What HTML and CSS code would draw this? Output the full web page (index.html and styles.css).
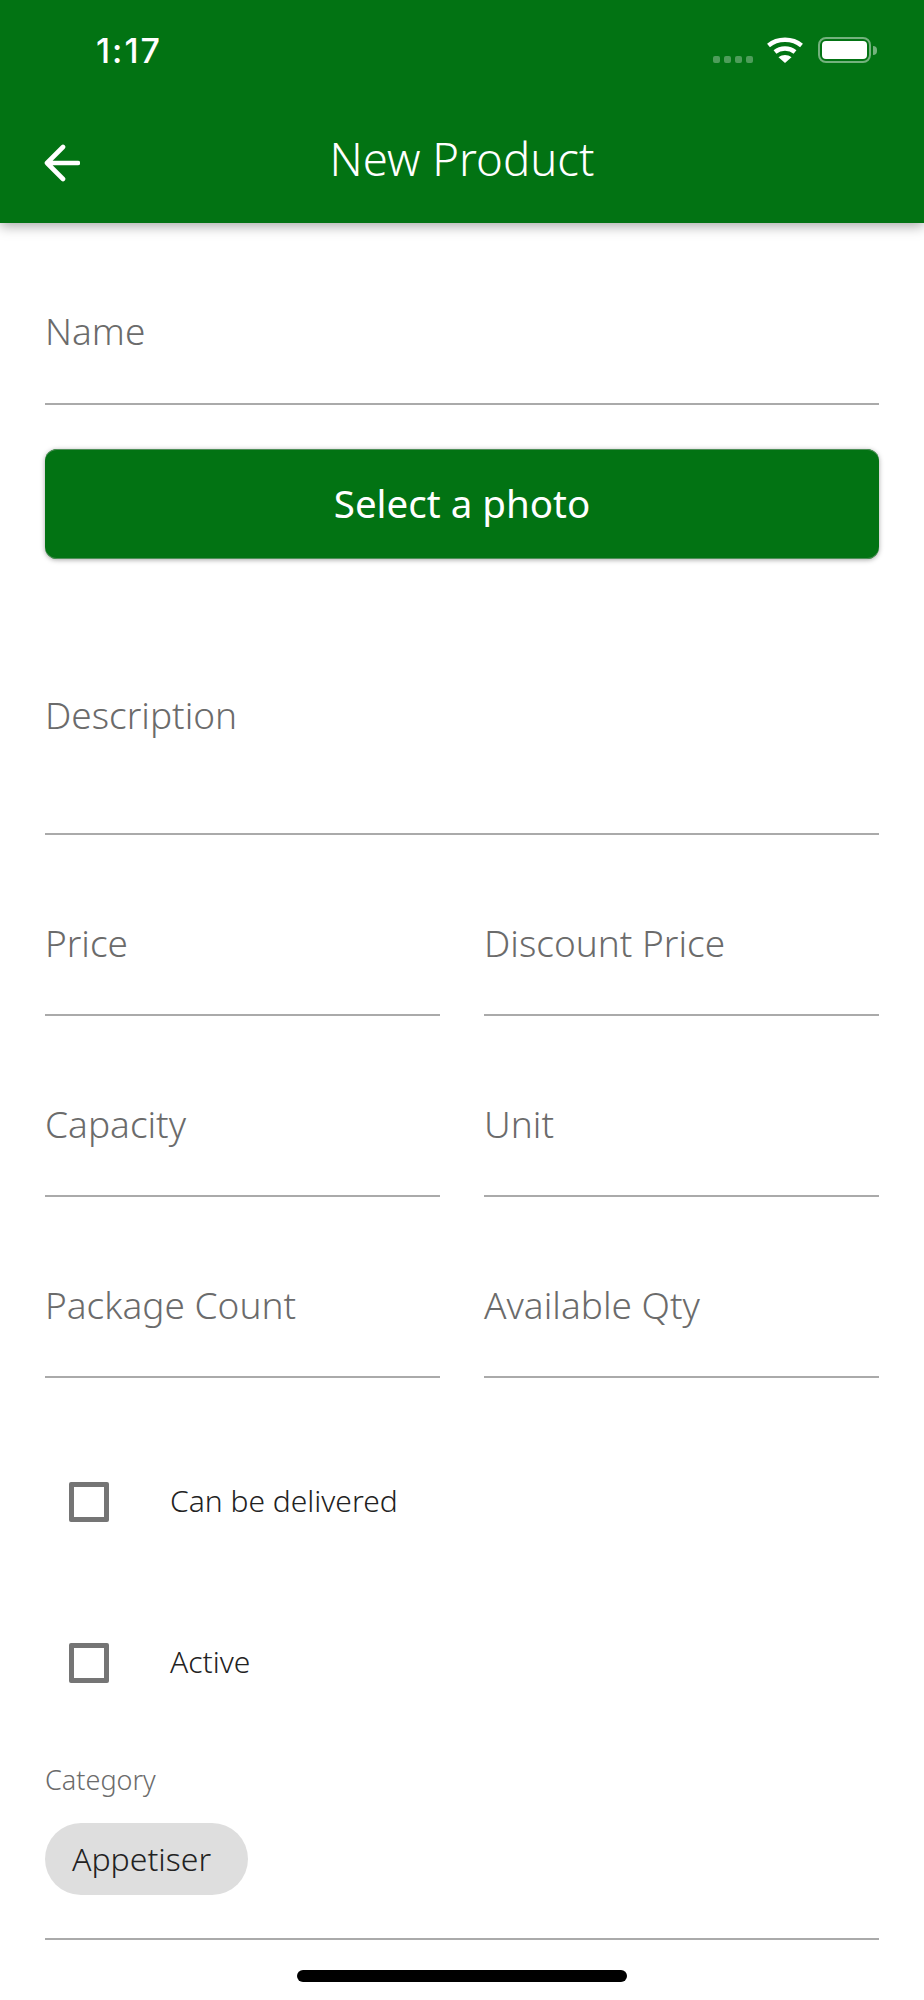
FILE: index.html
```html
<!DOCTYPE html>
<html lang="en">
<head>
  <meta charset="UTF-8">
  <meta name="viewport" content="width=device-width, initial-scale=1.0">
  <title>New Product</title>
  <link rel="stylesheet" href="styles.css">
</head>
<body>
  <div class="screen">
    <header class="header">
      <div class="status-bar">
        <span class="time">1:17</span>
        <div class="status-icons">
          <div class="signal"><i></i><i></i><i></i><i></i></div>
          <svg class="wifi" width="36" height="26" viewBox="0 0 36 26">
            <path d="M1.5 8.5C10.5 .8 25.5 .8 34.5 8.5" fill="none" stroke="#fff" stroke-width="4.4"/>
            <path d="M8 15C13.5 10.4 22.5 10.4 28 15" fill="none" stroke="#fff" stroke-width="4.4"/>
            <path d="M11.5 20.2C15.5 17.4 20.5 17.4 24.5 20.2L18 26Z" fill="#fff"/>
          </svg>
          <div class="battery"><div class="battery-fill"></div></div>
          <div class="battery-cap"></div>
        </div>
      </div>
      <div class="toolbar">
        <svg class="back" width="36" height="38" viewBox="0 0 36 38">
          <path d="M34 19H3M19 3L3 19L19 35" fill="none" stroke="#fff" stroke-width="4.6" stroke-linecap="round" stroke-linejoin="round"/>
        </svg>
        <h1 class="title">New Product</h1>
      </div>
    </header>

    <main class="form">
      <div class="field field-name"><span class="label">Name</span></div>
      <button class="photo-button">Select a photo</button>
      <div class="field field-desc"><span class="label">Description</span></div>

      <div class="field-row">
        <div class="field"><span class="label">Price</span></div>
        <div class="field"><span class="label">Discount Price</span></div>
      </div>
      <div class="field-row">
        <div class="field"><span class="label">Capacity</span></div>
        <div class="field"><span class="label">Unit</span></div>
      </div>
      <div class="field-row">
        <div class="field"><span class="label">Package Count</span></div>
        <div class="field"><span class="label">Available Qty</span></div>
      </div>

      <div class="check-row check-first"><div class="checkbox"></div><span class="check-label">Can be delivered</span></div>
      <div class="check-row"><div class="checkbox"></div><span class="check-label">Active</span></div>

      <div class="category">
        <div class="category-label">Category</div>
        <span class="chip">Appetiser</span>
      </div>
    </main>

    <div class="home-bar"></div>
  </div>
</body>
</html>
```

FILE: styles.css
```css
* {
  box-sizing: border-box;
}
html, body {
  margin: 0;
  padding: 0;
  background: #fff;
}
body {
  font-family: "Noto Sans", "Open Sans", sans-serif;
  font-weight: 300;
  color: #222;
}
.screen {
  position: relative;
  width: 924px;
  height: 2000px;
  overflow: hidden;
}

/* header */
.header {
  position: relative;
  height: 223px;
  background: #027313;
  box-shadow: 0 3px 12px rgba(0, 0, 0, 0.35);
  color: #fff;
}
.status-bar {
  display: flex;
  justify-content: space-between;
  align-items: flex-start;
  height: 112px;
  padding: 29px 47px 0 96px;
}
.time {
  font-family: "Inter", sans-serif;
  font-size: 34px;
  font-weight: 500;
  line-height: 44px;
  letter-spacing: 2px;
}
.status-icons {
  display: flex;
  align-items: center;
  height: 26px;
  margin-top: 8px;
}
.signal {
  display: flex;
  gap: 4px;
  margin: 18px 14px 0 0;
}
.signal i {
  width: 7px;
  height: 7px;
  border-radius: 2px;
  background: rgba(255, 255, 255, 0.3);
}
.wifi {
  margin-right: 15px;
}
.battery {
  width: 53px;
  height: 26px;
  padding: 2px;
  border: 2px solid rgba(255, 255, 255, 0.45);
  border-radius: 8px;
}
.battery-fill {
  width: 100%;
  height: 100%;
  background: #fff;
  border-radius: 4px;
}
.battery-cap {
  width: 4px;
  height: 9px;
  margin-left: 2px;
  background: rgba(255, 255, 255, 0.45);
  border-radius: 0 4px 4px 0;
}
.toolbar {
  display: flex;
  justify-content: center;
  position: relative;
  height: 96px;
}
.back {
  position: absolute;
  left: 44px;
  top: 32px;
}
.title {
  margin: 0;
  font-size: 45.5px;
  font-weight: 300;
  line-height: 93px;
}

/* form */
.form {
  padding: 0 45px;
}
.field {
  height: 181px;
  padding-top: 85px;
  border-bottom: 2px solid #aaa;
}
.field-name {
  height: 182px;
}
.field-desc {
  height: 276px;
  padding-top: 133px;
}
.label {
  display: block;
  font-size: 37px;
  line-height: 46px;
  color: #6b6b6b;
}
.field-row {
  display: grid;
  grid-template-columns: 395px 395px;
  gap: 44px;
}
.photo-button {
  display: block;
  width: 100%;
  height: 110px;
  margin-top: 44px;
  padding: 0 0 2px;
  border: 0;
  border-radius: 12px;
  background: #027313;
  box-shadow: inset 0 1px #4f8f59, inset 0 -1px #4f8f59, 0 1px 5px rgba(0, 0, 0, 0.35);
  color: #fff;
  font-family: inherit;
  font-size: 38.5px;
  font-weight: 400;
}
.check-row {
  display: flex;
  align-items: center;
  height: 161px;
  padding-left: 24px;
}
.check-first {
  margin-top: 43px;
}
.checkbox {
  width: 40px;
  height: 40px;
  border: 5px solid #757575;
  border-radius: 2px;
}
.check-label {
  margin-left: 61px;
  padding-bottom: 2px;
  font-size: 30px;
}
.category {
  height: 197px;
  padding-top: 19px;
  border-bottom: 2px solid #aaa;
}
.category-label {
  font-size: 27px;
  line-height: 36px;
  color: #6b6b6b;
}
.chip {
  display: inline-flex;
  align-items: center;
  height: 72px;
  margin-top: 25px;
  padding: 0 37px 2px 27px;
  border-radius: 36px;
  background: #dedede;
  font-size: 32px;
}
.home-bar {
  position: absolute;
  left: 297px;
  top: 1970px;
  width: 330px;
  height: 12px;
  border-radius: 6px;
  background: #000;
}
```
